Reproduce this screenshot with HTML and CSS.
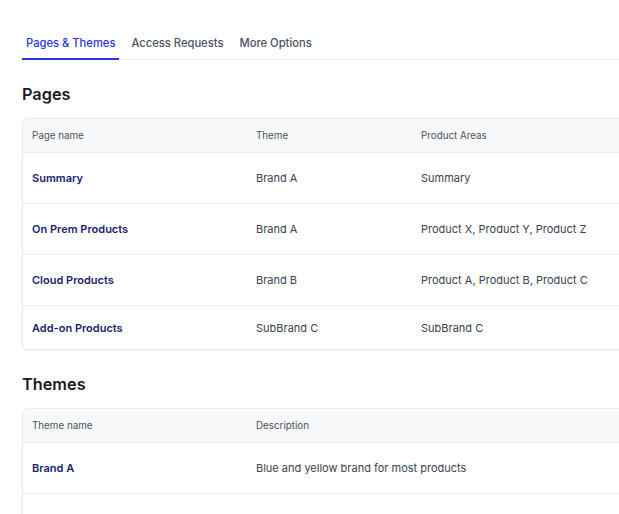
FILE: index.html
```html
<!DOCTYPE html>
<html>
<head>
    <meta charset="utf-8"/>
    <title>Pages &amp; Themes</title>
    <link rel="stylesheet" href="styles.css">
</head>
<body>
    <div class="page">
        <div class="tabs">
            <a class="tab active" href="#">Pages &amp; Themes</a>
            <a class="tab" href="#">Access Requests</a>
            <a class="tab" href="#">More Options</a>
        </div>

        <h2 class="section-title">Pages</h2>
        <div class="card">
            <div class="row head">
                <div class="cell">Page name</div>
                <div class="cell">Theme</div>
                <div class="cell">Product Areas</div>
            </div>
            <div class="row">
                <div class="cell name">Summary</div>
                <div class="cell">Brand A</div>
                <div class="cell">Summary</div>
            </div>
            <div class="row">
                <div class="cell name">On Prem Products</div>
                <div class="cell">Brand A</div>
                <div class="cell">Product X, Product Y, Product Z</div>
            </div>
            <div class="row">
                <div class="cell name">Cloud Products</div>
                <div class="cell">Brand B</div>
                <div class="cell">Product A, Product B, Product C</div>
            </div>
            <div class="row last">
                <div class="cell name">Add-on Products</div>
                <div class="cell">SubBrand C</div>
                <div class="cell">SubBrand C</div>
            </div>
        </div>

        <h2 class="section-title">Themes</h2>
        <div class="card">
            <div class="row head">
                <div class="cell">Theme name</div>
                <div class="cell wide">Description</div>
            </div>
            <div class="row">
                <div class="cell name">Brand A</div>
                <div class="cell wide">Blue and yellow brand for most products</div>
            </div>
            <div class="row">
                <div class="cell name"></div>
                <div class="cell wide"></div>
            </div>
        </div>
    </div>
</body>
</html>
```

FILE: styles.css
```css
html, body {
    margin: 0;
    background: #ffffff;
    overflow: hidden;
}

body {
    font-family: "Inter", "Liberation Sans", sans-serif;
    color: #3c4250;
}

.page {
    padding: 28px 0 0 22px;
    width: 760px;
}

.tabs {
    display: flex;
    gap: 8px;
    border-bottom: 1px solid #eef0f3;
}

.tab {
    display: block;
    padding: 7px 4px 7px;
    line-height: 16px;
    font-size: 11.2px;
    font-weight: 500;
    color: #4a5268;
    text-decoration: none;
    border-bottom: 2px solid transparent;
    margin-bottom: -1px;
}

.tab.active {
    color: #2438e0;
    border-bottom-color: #2438e0;
}

.section-title {
    margin: 23px 0 13px;
    font-size: 16.3px;
    line-height: 22px;
    font-weight: 600;
    color: #161a23;
}

.card {
    border: 1px solid #e9ebef;
    border-radius: 6px;
    box-shadow: 0 1px 2px rgba(20, 30, 50, 0.08);
    overflow: hidden;
}

.row {
    display: grid;
    grid-template-columns: 224px 165px 1fr;
    align-items: center;
    height: 50px;
    border-bottom: 1px solid #eceef1;
}

.row.head {
    height: 33px;
    background: #f8f9fb;
    color: #4b5160;
}

.row.last {
    height: 43px;
    border-bottom: none;
}

.cell {
    padding: 0 9px;
    font-size: 11px;
}

.row.head .cell {
    font-size: 9.8px;
}

.cell.wide {
    grid-column: span 2;
}

.cell.name {
    font-weight: 600;
    color: #1b1f6e;
}
```
